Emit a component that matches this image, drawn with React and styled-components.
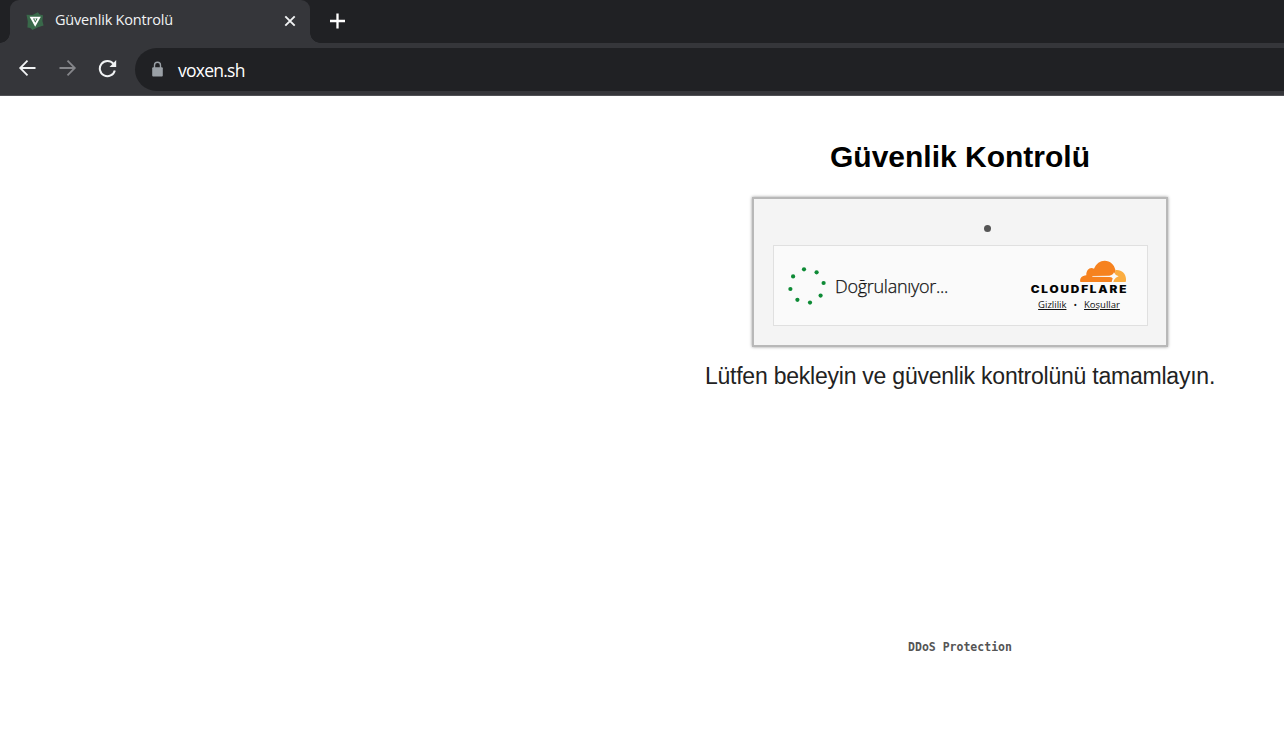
import React from 'react';
import styled, { createGlobalStyle } from 'styled-components';

const GlobalStyle = createGlobalStyle`
  body {
    margin: 0;
    background: #fff;
    overflow: hidden;
  }
`;

const Window = styled.div`
  width: 100vw;
  height: 100vh;
  overflow: hidden;
`;

const TabStrip = styled.div`
  display: flex;
  height: 43px;
  padding-left: 10px;
  background: #202124;
`;

const Tab = styled.div`
  position: relative;
  display: flex;
  align-items: center;
  box-sizing: border-box;
  width: 300px;
  height: 43px;
  padding: 0 13px 1px 15px;
  border-radius: 9px 9px 0 0;
  background: #35363a;

  &::before,
  &::after {
    content: '';
    position: absolute;
    bottom: 0;
    width: 10px;
    height: 10px;
  }

  &::before {
    left: -10px;
    background: radial-gradient(circle at 0 0, #202124 9.5px, #35363a 10px);
  }

  &::after {
    right: -10px;
    background: radial-gradient(circle at 100% 0, #202124 9.5px, #35363a 10px);
  }
`;

const TabTitle = styled.span`
  flex: 1;
  margin-left: 10px;
  padding-bottom: 3px;
  font: 14.5px/20px 'Open Sans', 'Noto Sans', sans-serif;
  letter-spacing: -0.2px;
  color: #f1f3f4;
  white-space: nowrap;
`;

const NewTab = styled.div`
  display: flex;
  align-items: center;
  padding: 0 0 1px 19px;
`;

const Toolbar = styled.div`
  display: flex;
  align-items: center;
  box-sizing: border-box;
  height: 53px;
  padding: 0 0 0 17px;
  border-bottom: 1px solid #505155;
  background: #35363a;
`;

const NavIcon = styled.svg`
  flex: none;
  width: 20px;
  height: 20px;
  margin: 0 20px 2px 0;
  color: ${(props) => (props.$disabled ? '#85868a' : '#f1f3f4')};
`;

const AddressBar = styled.div`
  flex: 1;
  display: flex;
  align-items: center;
  height: 43px;
  margin-left: -2px;
  padding-left: 16px;
  border-radius: 22px 0 0 22px;
  background: #202124;
`;

const Url = styled.span`
  margin-left: 14px;
  padding-top: 1px;
  font: 17.5px/24px 'Open Sans', 'Noto Sans', sans-serif;
  letter-spacing: -0.75px;
  color: #fff;
`;

/* the page is wider than the visible part of the window */
const Page = styled.main`
  display: flex;
  flex-direction: column;
  align-items: center;
  width: 1920px;
  padding-top: 43px;
  font-family: 'Liberation Sans', Arial, sans-serif;
`;

const Title = styled.h1`
  margin: 0;
  font-size: 30px;
  line-height: 36px;
  color: #000;
`;

const Challenge = styled.section`
  display: flex;
  flex-direction: column;
  align-items: center;
  box-sizing: border-box;
  width: 416px;
  height: 150px;
  margin-top: 22px;
  border: 2px solid #b8b8b8;
  background: #f4f4f4;
  box-shadow: 0 0 3px rgba(0, 0, 0, 0.4);
`;

const Dot = styled.div`
  width: 7px;
  height: 7px;
  margin: 26px 0 13px 54px;
  border-radius: 50%;
  background: #555;
`;

const Widget = styled.div`
  display: flex;
  align-items: center;
  box-sizing: border-box;
  width: 375px;
  height: 81px;
  margin-left: 1px;
  padding: 0 19px 0 13px;
  border: 1px solid #e0e0e0;
  background: #fafafa;
`;

const Status = styled.span`
  flex: 1;
  margin-left: 8px;
  font: 300 18px/24px 'Open Sans', 'Noto Sans', sans-serif;
  letter-spacing: -0.28px;
  color: #111;
  -webkit-text-stroke: 0.25px #111;
  white-space: nowrap;
`;

const Brand = styled.div`
  display: flex;
  flex-direction: column;
  align-items: center;
  padding-bottom: 2px;
`;

const Links = styled.div`
  display: flex;
  gap: 7px;
  margin-top: 3px;
  font: 9.5px/13px 'Open Sans', 'Noto Sans', sans-serif;
  color: #111;
`;

const Link = styled.a`
  text-decoration: underline;
  text-underline-offset: 1px;
`;

const Message = styled.p`
  margin: 15px 0 0;
  font-size: 23px;
  line-height: 28px;
  letter-spacing: -0.23px;
  color: #222;
  white-space: nowrap;
`;

const Footer = styled.footer`
  margin-top: 249px;
  font: 600 11.5px/16px 'DejaVu Sans Mono', 'Liberation Mono', monospace;
  color: #555;
  white-space: nowrap;
`;

const SPINNER_DOTS = [
  [17, 3.3], [29.6, 6.3], [36.6, 17], [33.6, 29.6],
  [23, 36.6], [10.4, 33.8], [3.4, 23], [6.1, 10.4],
];

function Favicon() {
  return (
    <svg width="20" height="20" viewBox="0 0 20 20">
      <path d="M1.5 3.8L7.5 4L12.8 1.2L14.6 3.6L18 4.2L17.4 10L18.6 14.6L13 16.2L7.4 19L5.4 17L2.4 16.4L2.8 10.5Z" fill="#39694a" />
      <path d="M4.6 5.8H15.8L10.2 15.8Z" fill="#fff" />
      <path d="M8 7.6H12.6L10.3 11.8Z" fill="#39694a" />
      <path d="M9.7 7.6H10.9V9.4H9.7Z" fill="#fff" />
    </svg>
  );
}

function Spinner() {
  return (
    <svg width="40" height="40" viewBox="0 0 40 40">
      {SPINNER_DOTS.map(([x, y]) => (
        <circle key={`${x}-${y}`} cx={x} cy={y} r="2.1" fill="#0d8a35" />
      ))}
    </svg>
  );
}

function CloudflareLogo() {
  return (
    <svg width="98" height="36" viewBox="30 12 294 108">
      <path d="M181 81C178 70 186 62 199 61C198 45 210 34 222 41C229 25 240 17 254 17C271 17 283 29 286 44C289 49 285 56 283 62L277 81Z" fill="#f6821f" />
      <path d="M287 45C304 43 317 54 318 72C318 76 318 79 317 81H277L283 66Z" fill="#fbad41" />
      <path d="M217 63L268 62Q279 61 282 52Q285 61 296 64Q286 67 282 75L280 81H275L278 70Q275 66 268 66L217 65Z" fill="#fafafa" />
      <text
        x="32"
        y="113"
        textLength="293"
        lengthAdjust="spacingAndGlyphs"
        fontFamily="Inter, sans-serif"
        fontSize="29"
        fontWeight="900"
        letterSpacing="4.5"
        fill="#050505"
      >
        CLOUDFLARE
      </text>
    </svg>
  );
}

function BrowserChrome() {
  return (
    <header>
      <TabStrip>
        <Tab>
          <Favicon />
          <TabTitle>Güvenlik Kontrolü</TabTitle>
          <svg width="14" height="14" viewBox="0 0 14 14" stroke="#f1f3f4" strokeWidth="1.9">
            <path d="M2.3 2.3L11.7 11.7M11.7 2.3L2.3 11.7" />
          </svg>
        </Tab>
        <NewTab>
          <svg width="16" height="16" viewBox="0 0 16 16" stroke="#fff" strokeWidth="2.3">
            <path d="M8.5 .5V15.5M1 8H16" />
          </svg>
        </NewTab>
      </TabStrip>
      <Toolbar>
        <NavIcon viewBox="0 0 20 20" fill="none" stroke="currentColor" strokeWidth="1.8">
          <path d="M18.5 10H3.5M10.5 2.7L3.2 10L10.5 17.3" />
        </NavIcon>
        <NavIcon $disabled viewBox="0 0 20 20" fill="none" stroke="currentColor" strokeWidth="1.8">
          <path d="M2.5 10H17.5M10.5 2.7L17.8 10L10.5 17.3" />
        </NavIcon>
        <NavIcon viewBox="0 0 20 20" fill="none" stroke="currentColor" strokeWidth="2">
          <path d="M16.3 5.7A7.6 7.6 0 1 0 17.8 12.4" />
          <path d="M19.2 2V9H12.5Z" fill="currentColor" stroke="none" />
        </NavIcon>
        <AddressBar>
          <svg width="13" height="16" viewBox="0 0 13 16">
            <path d="M3.5 7V4.3A3 3 0 0 1 9.5 4.3V7" fill="none" stroke="#9aa0a6" strokeWidth="1.4" />
            <rect x="1.2" y="6.3" width="10.6" height="9.2" rx="1" fill="#9aa0a6" />
          </svg>
          <Url>voxen.sh</Url>
        </AddressBar>
      </Toolbar>
    </header>
  );
}

function App() {
  return (
    <Window>
      <GlobalStyle />
      <BrowserChrome />
      <Page>
        <Title>Güvenlik Kontrolü</Title>
        <Challenge>
          <Dot />
          <Widget>
            <Spinner />
            <Status>Doğrulanıyor...</Status>
            <Brand>
              <CloudflareLogo />
              <Links>
                <Link>Gizlilik</Link>
                <span>•</span>
                <Link>Koşullar</Link>
              </Links>
            </Brand>
          </Widget>
        </Challenge>
        <Message>Lütfen bekleyin ve güvenlik kontrolünü tamamlayın.</Message>
        <Footer>DDoS Protection</Footer>
      </Page>
    </Window>
  );
}

export default App;
